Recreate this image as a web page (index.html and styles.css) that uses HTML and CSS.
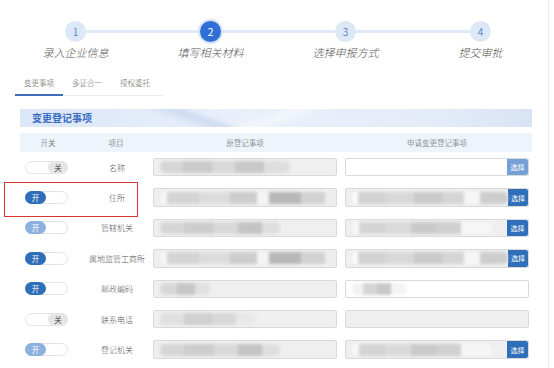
FILE: index.html
```html
<!DOCTYPE html>
<html lang="zh-CN">
<head>
    <meta charset="UTF-8">
    <meta name="viewport" content="width=device-width, initial-scale=1.0">
    <title>变更登记</title>
    <link rel="stylesheet" href="styles.css">
</head>
<body>
<div class="page">

    <ol class="steps">
        <li class="step"><span class="dot">1</span><span class="step-name">录入企业信息</span></li>
        <li class="step active"><span class="dot">2</span><span class="step-name">填写相关材料</span></li>
        <li class="step"><span class="dot">3</span><span class="step-name">选择申报方式</span></li>
        <li class="step"><span class="dot">4</span><span class="step-name">提交审批</span></li>
    </ol>

    <ul class="tabs">
        <li class="tab current">变更事项</li>
        <li class="tab">多证合一</li>
        <li class="tab">授权委托</li>
    </ul>

    <section class="panel">
        <h2 class="panel-title">变更登记事项</h2>

        <div class="table">
            <div class="row head">
                <div class="cell">开关</div>
                <div class="cell">项目</div>
                <div class="cell">原登记事项</div>
                <div class="cell">申请变更登记事项</div>
            </div>

            <div class="row">
                <div class="cell"><span class="switch off"><span class="knob">关</span></span></div>
                <div class="cell name">名称</div>
                <div class="cell"><div class="field"><span class="blur b1"></span></div></div>
                <div class="cell"><div class="field white"><span class="fill"></span><button class="pick faded">选择</button></div></div>
            </div>

            <div class="row">
                <div class="cell"><span class="switch on"><span class="knob">开</span></span></div>
                <div class="cell name">住所</div>
                <div class="cell"><div class="field"><span class="blur b2"></span></div></div>
                <div class="cell"><div class="field"><span class="blur b3"></span><button class="pick">选择</button></div></div>
            </div>

            <div class="row">
                <div class="cell"><span class="switch on faded"><span class="knob">开</span></span></div>
                <div class="cell name">管辖机关</div>
                <div class="cell"><div class="field"><span class="blur b4"></span></div></div>
                <div class="cell"><div class="field"><span class="blur b5"></span><button class="pick">选择</button></div></div>
            </div>

            <div class="row">
                <div class="cell"><span class="switch on"><span class="knob">开</span></span></div>
                <div class="cell name">属地监管工商所</div>
                <div class="cell"><div class="field"><span class="blur b2"></span></div></div>
                <div class="cell"><div class="field"><span class="blur b3"></span><button class="pick">选择</button></div></div>
            </div>

            <div class="row">
                <div class="cell"><span class="switch on"><span class="knob">开</span></span></div>
                <div class="cell name">邮政编码</div>
                <div class="cell"><div class="field"><span class="blur b6"></span></div></div>
                <div class="cell"><div class="field white"><span class="blur b7"></span></div></div>
            </div>

            <div class="row">
                <div class="cell"><span class="switch off"><span class="knob">关</span></span></div>
                <div class="cell name">联系电话</div>
                <div class="cell"><div class="field"><span class="blur b8"></span></div></div>
                <div class="cell"><div class="field"></div></div>
            </div>

            <div class="row">
                <div class="cell"><span class="switch on faded"><span class="knob">开</span></span></div>
                <div class="cell name">登记机关</div>
                <div class="cell"><div class="field"><span class="blur b4"></span></div></div>
                <div class="cell"><div class="field"><span class="blur b5"></span><button class="pick">选择</button></div></div>
            </div>
        </div>
    </section>

    <!-- red annotation box around the 住所 row -->
    <div class="highlight"></div>
</div>
</body>
</html>
```

FILE: styles.css
```css
:root {
    --blue: #2f6eb8;
    --blue-light: #8db1df;
    --step-bg: #dde8f7;
    --step-text: #5b86c4;
    --band: #e3ecf9;
    --head-row: #eef4fc;
    --field-bg: #efefef;
    --field-border: #d9d9d9;
    --text: #555555;
}

* {
    box-sizing: border-box;
}

body {
    margin: 0;
    background: #ffffff;
    font-family: "Noto Sans CJK SC", "Noto Sans", sans-serif;
    color: var(--text);
}

.page {
    position: relative;
    width: 549px;
    height: 368px;
    border-right: 1px solid #ececec;
    overflow: hidden;
}

/* steps */
.steps {
    position: relative;
    display: grid;
    grid-template-columns: repeat(4, 135px);
    margin: 0 0 0 8px;
    padding: 21px 0 0;
    list-style: none;
}

.steps::before {
    content: "";
    position: absolute;
    top: 30px;
    left: 67px;
    width: 404px;
    height: 3px;
    background: #dfe8f6;
}

.step {
    position: relative;
    display: flex;
    flex-direction: column;
    align-items: center;
}

.dot {
    width: 21px;
    height: 21px;
    border-radius: 50%;
    background: var(--step-bg);
    color: var(--step-text);
    font-size: 10px;
    line-height: 21px;
    text-align: center;
}

.step.active .dot {
    background: #2f6fd6;
    color: #ffffff;
    font-size: 11px;
    box-shadow: 0 0 0 2px #d6e2f5;
}

.step-name {
    margin-top: 3px;
    font-size: 11px;
    line-height: 14px;
    font-style: italic;
    font-weight: 300;
    color: #555555;
}

/* tabs */
.tabs {
    display: flex;
    width: 148px;
    margin: 18px 0 0 15px;
    padding: 0;
    list-style: none;
    border-bottom: 1px solid #ececec;
}

.tab {
    padding: 0 9px 5px;
    font-size: 7.5px;
    font-weight: 300;
    line-height: 12px;
    color: #666666;
    border-bottom: 2px solid transparent;
    margin-bottom: -1px;
}

.tab.current {
    border-bottom-color: #3d6fb8;
    color: #4a4a4a;
}

/* panel */
.panel {
    margin: 13px 16px 0 20px;
}

.panel-title {
    margin: 0;
    height: 18px;
    padding-left: 12px;
    font-size: 10px;
    line-height: 18px;
    font-weight: bold;
    color: #3a6cc2;
    background:
        linear-gradient(160deg, transparent 45%, rgba(255,255,255,0.45) 50%, transparent 56%),
        linear-gradient(200deg, transparent 60%, rgba(190,208,235,0.6) 64%, transparent 70%),
        linear-gradient(90deg, #dbe6f7 0%, #e9f0fa 45%, #e4ecf8 80%, #d8e3f4 100%);
}

.table {
    margin-top: 6px;
}

.row {
    display: grid;
    grid-template-columns: 56px 77px 184px 196px;
    align-items: center;
    height: 30.4px;
}

.row.head {
    height: 19px;
    background: var(--head-row);
    font-size: 7.5px;
    font-weight: 300;
    color: #555555;
    text-align: center;
}

.row.head .cell:nth-child(2) {
    padding-left: 3px;
}

.row.head .cell:nth-child(4),
.row .cell:nth-child(4) {
    padding: 0 4px 0 8px;
}

.name {
    padding-left: 5px;
    text-align: center;
    font-size: 8px;
    font-weight: 300;
    color: #555555;
}

/* switch */
.switch {
    display: flex;
    width: 43px;
    height: 13px;
    margin-left: 5px;
    border: 1px solid #e2e2e2;
    border-radius: 7px;
    background: #ffffff;
}

.knob {
    width: 21px;
    height: 13px;
    margin-top: -1px;
    border-radius: 7px;
    font-size: 7.5px;
    line-height: 13px;
    text-align: center;
}

.switch.on .knob {
    margin-left: -1px;
    background: var(--blue);
    color: #ffffff;
}

.switch.on.faded .knob {
    background: var(--blue-light);
}

.switch.off {
    justify-content: flex-end;
}

.switch.off .knob {
    width: 20px;
    margin-right: -1px;
    background: #e6e6e6;
    color: #444444;
}

/* fields */
.field {
    display: flex;
    align-items: center;
    height: 18.5px;
    border: 1px solid var(--field-border);
    border-radius: 2px;
    background: var(--field-bg);
    overflow: hidden;
}

.field.white {
    background: #ffffff;
}

.fill {
    flex: 1;
}

.pick {
    margin-left: auto;
    width: 21px;
    height: 100%;
    padding: 0;
    border: none;
    border-radius: 0 2px 2px 0;
    background: var(--blue);
    color: #ffffff;
    font-family: inherit;
    font-size: 7px;
}

.pick.faded {
    background: #76a1d6;
}

/* blurred values */
.blur {
    height: 12px;
    margin-left: 6px;
    border-radius: 5px;
    filter: blur(1.4px);
}

.b1 {
    width: 130px;
    background: linear-gradient(90deg, #d6d6d6 0 18%, #cacaca 18% 40%, #d9d9d9 40% 58%, #c8c8c8 58% 80%, #dedede 80%);
}

.b2 {
    width: 176px;
    background: linear-gradient(90deg, #f6f6f6 0 4%, #d4d4d4 4% 22%, #dcdcdc 22% 40%, #cdcdcd 40% 55%, #f4f4f4 55% 62%, #b8b8b8 62% 80%, #d2d2d2 80% 94%, #ececec 94%);
}

.b3 {
    width: 165px;
    background: linear-gradient(90deg, #fafafa 0 4%, #d2d2d2 4% 22%, #d8d8d8 22% 40%, #cacaca 40% 58%, #d5d5d5 58% 72%, #f6f6f6 72% 82%, #cdcdcd 82%);
}

.b4 {
    width: 120px;
    background: linear-gradient(90deg, #d6d6d6 0 20%, #cdcdcd 20% 45%, #d9d9d9 45% 65%, #c4c4c4 65% 85%, #dedede 85%);
}

.b5 {
    width: 140px;
    background: linear-gradient(90deg, #f8f8f8 0 5%, #d4d4d4 5% 24%, #dadada 24% 42%, #cacaca 42% 60%, #d0d0d0 60% 78%, #f6f6f6 78%);
}

.b6 {
    width: 50px;
    background: linear-gradient(90deg, #d8d8d8 0 35%, #c6c6c6 35% 70%, #e0e0e0 70%);
}

.b7 {
    width: 55px;
    background: linear-gradient(90deg, #f2f2f2 0 20%, #d6d6d6 20% 45%, #c8c8c8 45% 70%, #f4f4f4 70%);
}

.b8 {
    width: 95px;
    background: linear-gradient(90deg, #e0e0e0 0 25%, #d0d0d0 25% 55%, #d8d8d8 55% 80%, #e8e8e8 80%);
}

/* annotation overlay */
.highlight {
    position: absolute;
    top: 182px;
    left: 4px;
    width: 134px;
    height: 35px;
    border: 1.5px solid #d9352f;
}
```
